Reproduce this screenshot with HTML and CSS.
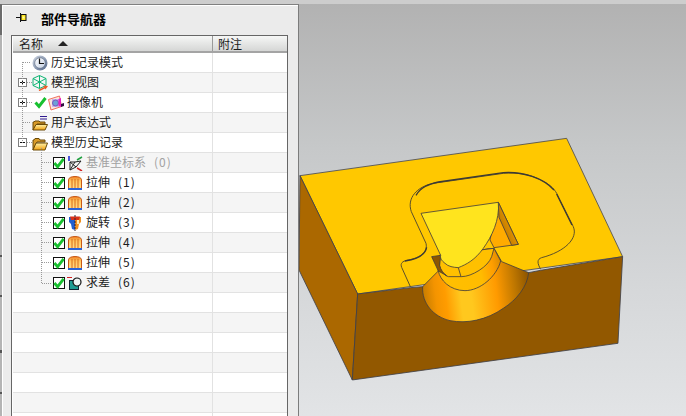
FILE: index.html
```html
<!DOCTYPE html>
<html lang="zh">
<head>
<meta charset="utf-8">
<title>部件导航器</title>
<link rel="stylesheet" href="styles.css">
</head>
<body>
<svg class="defs" width="0" height="0" aria-hidden="true">
  <defs>
    <linearGradient id="clockRim" x1="0" y1="0" x2="1" y2="1"><stop offset="0" stop-color="#d4dae4"/><stop offset="1" stop-color="#4f6488"/></linearGradient>
    <linearGradient id="clockFace" x1="0" y1="0" x2="1" y2="1"><stop offset="0" stop-color="#ffffff"/><stop offset="1" stop-color="#c4d0e4"/></linearGradient>
    <linearGradient id="folderBody" x1="0" y1="0" x2="0" y2="1"><stop offset="0" stop-color="#fff3a8"/><stop offset="1" stop-color="#f0a010"/></linearGradient>
    <linearGradient id="extrudeBody" x1="0" y1="0" x2="0" y2="1"><stop offset="0" stop-color="#ee7a20"/><stop offset=".35" stop-color="#ffc860"/><stop offset="1" stop-color="#ffdf90"/></linearGradient>
    <symbol id="i-clock" viewBox="0 0 16 16"><circle cx="8" cy="8" r="7.500" fill="url(#clockRim)"/><circle cx="8" cy="8" r="5.300" fill="url(#clockFace)" stroke="#56647c" stroke-width=".6"/><path d="M7.500 3.500V8.500H12" fill="none" stroke="#111" stroke-width="1.200"/></symbol>
    <symbol id="i-view" viewBox="0 0 16 16"><path d="M7.500 .5L14 3.500V10.500L7.500 13.500L1 10.500V3.500ZM1 3.500L7.500 7L14 3.500M7.500 7V13.500M1 10.500L7.500 7L14 10.500M7.500 .5V7" fill="none" stroke="#10b474" stroke-width="1"/><path d="M7 15.500L13 12.500" stroke="#ee5a28" stroke-width="1.500"/><path d="M11.500 10.500L16 11L13.500 14.500Z" fill="#ee5a28"/></symbol>
    <symbol id="i-check" viewBox="0 0 13 13"><path d="M1.500 6.500L5 10.500L11.500 2" fill="none" stroke="#18c030" stroke-width="3"/></symbol>
    <symbol id="i-camera" viewBox="0 0 16 16"><path d="M.5 4.500L11.500 1L13.500 11.500L3 15Z" fill="#fbe6dc" stroke="#f07060"/><rect x="4" y="4" width="7" height="8" fill="#c4b4ec"/><circle cx="7.500" cy="8" r="3" fill="#6ea0d8" stroke="#7a58b8"/><path d="M10.500 4L13 3V12L10.500 11Z" fill="#e820c0"/><path d="M13 9L16 8V11L13 12Z" fill="#301040"/></symbol>
    <symbol id="i-folder" viewBox="0 0 16 16"><path d="M1 15V5H2L3 3.500H7L8 5H13V7H5Z" fill="#d89a28" stroke="#6a4a08"/><path d="M1 15L4 8H15.500L13 15Z" fill="url(#folderBody)" stroke="#6a4a08"/></symbol>
    <symbol id="i-expr" viewBox="0 0 16 16"><path d="M8 1.500H15M8 4H15" stroke="#301a90" stroke-width="1"/><path d="M1 15V7H2L3 6H7L8 7H13V9H5Z" fill="#d89a28" stroke="#6a4a08"/><path d="M1 15L4 9.500H15.500L13 15Z" fill="url(#folderBody)" stroke="#6a4a08"/></symbol>
    <symbol id="i-extrude" viewBox="0 0 16 16"><path d="M1.500 14.500V4.500C2 2.500 4.500 1.500 8 1.500S14 2.500 14.500 4.500V14.500Z" fill="url(#extrudeBody)" stroke="#c85a18"/><path d="M5 4V14M8 4V14M11 4V14" stroke="#d86a18" stroke-width="1"/><path d="M1 14H15" stroke="#2a62d4" stroke-width="2"/></symbol>
    <symbol id="i-revolve" viewBox="0 0 16 16"><path d="M2 2H8V15L5 14L4 9L2 7Z" fill="#2060d0"/><path d="M8 2H14V7L12 9L11 14L8 15Z" fill="#f09020"/><path d="M3 1.500H13L12 5H4Z" fill="#d83018"/><path d="M8 0V16" stroke="#302030" stroke-width="1" stroke-dasharray="2 1"/><path d="M10 5H12V9H10Z" fill="#ffe8b0"/></symbol>
    <symbol id="i-datum" viewBox="0 0 16 16"><path d="M3 7L3 15L9 12L14 6L8 7Z" fill="#f4f4f4" stroke="#222" stroke-width="1"/><path d="M3 7L9 12M8 7L3 15" stroke="#222" stroke-width="1"/><path d="M2 6V1" stroke="#1020d0" stroke-width="1.500"/><path d="M10 5L15 2" stroke="#20a040" stroke-width="1.500"/><path d="M10 13L15 16" stroke="#d02020" stroke-width="1.500"/></symbol>
    <symbol id="i-subtract" viewBox="0 0 16 16"><path d="M0 2.500H5" stroke="#d02020" stroke-width="1"/><rect x="2.500" y="5.500" width="9" height="9" fill="#1f9c94" stroke="#123"/><circle cx="10" cy="7" r="4" fill="#eef4f4" stroke="#111" stroke-width="1.200"/></symbol>
    <symbol id="i-plus" viewBox="0 0 9 9"><rect x=".5" y=".5" width="8" height="8" fill="#fff" stroke="#808080"/><path d="M2 4.500H7M4.500 2V7" stroke="#111"/></symbol>
    <symbol id="i-minus" viewBox="0 0 9 9"><rect x=".5" y=".5" width="8" height="8" fill="#fff" stroke="#808080"/><path d="M2 4.500H7" stroke="#111"/></symbol>
  </defs>
</svg>

<div class="topstrip"></div>
<div class="workspace">
  <div class="edge"></div>
  <section class="panel">
    <header class="panel-title">
      <svg class="pin" viewBox="0 0 12 10"><path d="M0 4.500H4" stroke="#111"/><path d="M4.500 0V9" stroke="#111"/><rect x="5" y="1.500" width="5" height="6" fill="#ffe820" stroke="#111"/><rect x="6.500" y="3.500" width="2" height="2" fill="#fff8a0"/></svg>
      <span>部件导航器</span>
    </header>
    <div class="tree">
      <div class="tree-head">
        <div class="head-name"><span>名称</span><i class="sort"></i></div>
        <div class="head-note">附注</div>
      </div>
      <div class="rows">
        <svg class="links" width="274" height="240" viewBox="13 53 274 240"><path d="M22.500 62V143M23 62.500H31M27 82.500H32M27 102.500H33M23 122.500H31M27 142.500H32M41.500 148V283M42 162.500H52M42 182.500H52M42 202.500H52M42 222.500H52M42 242.500H52M42 262.500H52M42 283.500H52" fill="none" stroke="#9a9a9a" stroke-dasharray="1 1"/></svg>

        <div class="row"><div class="name top"><svg class="ico"><use href="#i-clock"/></svg><span class="label">历史记录模式</span></div><div class="note"></div></div>
        <div class="row"><div class="name exp"><svg class="box"><use href="#i-plus"/></svg><svg class="ico"><use href="#i-view"/></svg><span class="label">模型视图</span></div><div class="note"></div></div>
        <div class="row"><div class="name exp"><svg class="box"><use href="#i-plus"/></svg><svg class="vis"><use href="#i-check"/></svg><svg class="ico"><use href="#i-camera"/></svg><span class="label">摄像机</span></div><div class="note"></div></div>
        <div class="row"><div class="name top"><svg class="ico"><use href="#i-expr"/></svg><span class="label">用户表达式</span></div><div class="note"></div></div>
        <div class="row"><div class="name exp"><svg class="box"><use href="#i-minus"/></svg><svg class="ico"><use href="#i-folder"/></svg><span class="label">模型历史记录</span></div><div class="note"></div></div>

        <div class="row"><div class="name kid"><span class="cb"><svg><use href="#i-check"/></svg></span><svg class="ico"><use href="#i-datum"/></svg><span class="label muted">基准坐标系<span class="seq">(0)</span></span></div><div class="note"></div></div>
        <div class="row"><div class="name kid"><span class="cb"><svg><use href="#i-check"/></svg></span><svg class="ico"><use href="#i-extrude"/></svg><span class="label">拉伸<span class="seq">(1)</span></span></div><div class="note"></div></div>
        <div class="row"><div class="name kid"><span class="cb"><svg><use href="#i-check"/></svg></span><svg class="ico"><use href="#i-extrude"/></svg><span class="label">拉伸<span class="seq">(2)</span></span></div><div class="note"></div></div>
        <div class="row"><div class="name kid"><span class="cb"><svg><use href="#i-check"/></svg></span><svg class="ico"><use href="#i-revolve"/></svg><span class="label">旋转<span class="seq">(3)</span></span></div><div class="note"></div></div>
        <div class="row"><div class="name kid"><span class="cb"><svg><use href="#i-check"/></svg></span><svg class="ico"><use href="#i-extrude"/></svg><span class="label">拉伸<span class="seq">(4)</span></span></div><div class="note"></div></div>
        <div class="row"><div class="name kid"><span class="cb"><svg><use href="#i-check"/></svg></span><svg class="ico"><use href="#i-extrude"/></svg><span class="label">拉伸<span class="seq">(5)</span></span></div><div class="note"></div></div>
        <div class="row"><div class="name kid"><span class="cb"><svg><use href="#i-check"/></svg></span><svg class="ico"><use href="#i-subtract"/></svg><span class="label">求差<span class="seq">(6)</span></span></div><div class="note"></div></div>

        <div class="row"><div class="name"></div><div class="note"></div></div>
        <div class="row"><div class="name"></div><div class="note"></div></div>
        <div class="row"><div class="name"></div><div class="note"></div></div>
        <div class="row"><div class="name"></div><div class="note"></div></div>
        <div class="row"><div class="name"></div><div class="note"></div></div>
        <div class="row"><div class="name"></div><div class="note"></div></div>
        <div class="row"><div class="name"></div><div class="note"></div></div>
      </div>
    </div>
  </section>

  <main class="viewport">
    <svg class="model" viewBox="0 0 387 412" preserveAspectRatio="xMinYMin slice">
      <defs>
        <linearGradient id="coneGrad" gradientUnits="userSpaceOnUse" x1="398" y1="520" x2="716" y2="480">
          <stop offset="0" stop-color="#c27a00"/><stop offset=".13" stop-color="#f49400"/><stop offset=".22" stop-color="#ff9c00"/><stop offset=".36" stop-color="#ffc81e"/><stop offset=".46" stop-color="#ffc81e"/><stop offset=".7" stop-color="#ff9a00"/><stop offset=".88" stop-color="#bd7600"/><stop offset="1" stop-color="#925800"/>
        </linearGradient>
        <linearGradient id="ringGrad" gradientUnits="userSpaceOnUse" x1="445" y1="440" x2="635" y2="400">
          <stop offset="0" stop-color="#ffc000"/><stop offset=".65" stop-color="#ffbc00"/><stop offset=".85" stop-color="#ff9e00"/><stop offset="1" stop-color="#d88a00"/>
        </linearGradient>
        <linearGradient id="wallGrad" gradientUnits="userSpaceOnUse" x1="630" y1="300" x2="680" y2="280">
          <stop offset="0" stop-color="#b87400"/><stop offset="1" stop-color="#f4a000"/>
        </linearGradient>
      </defs>
      <g transform="translate(-9 126) scale(.3333)">
        <path class="top-face" d="M30 137L830 25L998 380L203 492Z"/>
        <path class="left-face" d="M30 137L203 492L187 750L27 420Z"/>
        <path class="front-face" d="M203 492L362 473L398 470L716 428L752 421L998 380L984 640L187 750Z"/>
        <path class="cut" d="M398 470L445 423L450 375L612 355L635 395L716 428C712 470 680 510 640 535C590 570 530 582 480 572C430 560 395 520 398 470Z" fill="url(#coneGrad)"/>
        <path class="cut" d="M445 423C450 450 480 482 525 482C570 482 620 440 632 393L612 355L450 375Z" fill="url(#ringGrad)"/>
        <path class="cut" d="M612 355L605 380C595 410 545 440 515 440L475 440C460 435 450 420 448 405L450 375Z" fill="#ffc000"/>
        <path class="cut" d="M425 380L452 376L449 406C452 420 460 430 470 437L445 423Z" fill="#8c5600"/>
        <path class="cut" d="M625 217L685 343L612 353L600 330Z" fill="#ffab00"/>
        <path class="cut" d="M625 217L685 343L665 346L627 262Z" fill="url(#wallGrad)"/>
        <path class="cut" d="M393 250L625 217C630 270 605 320 580 355C555 390 530 403 505 413C490 412 475 410 465 400C455 392 450 385 452 376Z" fill="#ffe41e"/>
        <path class="cut" d="M505 413L513 440" fill="none"/>
        <path class="contour" d="M362 472L335 412C330 400 338 394 350 391C385 385 415 370 408 340L364 245C350 205 380 170 430 160L640 130C720 122 785 160 800 190L850 290C865 325 825 365 755 383C740 388 742 400 752 418"/>
        <path class="contour-shade" d="M378 196C392 172 415 163 445 156L640 128C700 124 760 145 792 180M800 192L846 285M345 393C380 388 405 378 410 352"/>
      </g>
    </svg>
  </main>
</div>
</body>
</html>
```

FILE: styles.css
```css
* { box-sizing: border-box; }

html, body {
  margin: 0;
  height: 100%;
  overflow: hidden;
}

body {
  display: flex;
  flex-direction: column;
  font-family: "Noto Sans CJK SC", "Liberation Sans", sans-serif;
  font-size: 12px;
  color: #1c1c1c;
  background: #ccc;
}

.defs { display: block; height: 0; }

.topstrip {
  height: 4px;
  flex: none;
  background: #cdcdcd;
}

.workspace {
  flex: 1;
  min-height: 0;
  display: flex;
}

.edge {
  width: 2px;
  flex: none;
  background: linear-gradient(to bottom,
    #6c6c6c 0, #6c6c6c 31px,
    #b4b4b4 31px, #b4b4b4 251px,
    #555 251px, #555 253px,
    #b4b4b4 253px, #b4b4b4 291px,
    #555 291px, #555 293px,
    #b4b4b4 293px, #b4b4b4 346px,
    #555 346px, #555 349px,
    #b4b4b4 349px, #b4b4b4 388px,
    #555 388px, #555 390px,
    #b4b4b4 390px);
}

.panel {
  width: 297px;
  flex: none;
  display: flex;
  flex-direction: column;
  min-height: 0;
  overflow: hidden;
  background: #ebebeb;
  border-top: 1px solid #808080;
  border-right: 1px solid #7c7c7c;
  box-shadow: inset 1px 1px 0 #fff;
}

.panel-title {
  height: 30px;
  flex: none;
  display: flex;
  align-items: center;
  padding: 0 0 4px 14px;
  font-size: 13px;
  font-weight: 700;
  color: #000;
}

.pin {
  width: 12px;
  height: 10px;
  margin-right: 13px;
}

.tree {
  flex: none;
  width: 277px;
  margin-left: 9px;
  padding-left: 1px;
  background: #fff;
  border: 1px solid #666;
  border-bottom: 0;
}

.tree-head {
  height: 17px;
  display: grid;
  grid-template-columns: 200px 74px;
  background: linear-gradient(to bottom, #f6f7f6, #d5d6d5);
  border-bottom: 2px solid #a4a4a4;
  line-height: 14px;
}

.head-name {
  display: flex;
  align-items: center;
  padding-left: 6px;
  border-right: 1px solid #9a9a9a;
}

.head-note {
  display: flex;
  align-items: center;
  padding-left: 5px;
}

.sort {
  width: 0;
  height: 0;
  margin-left: 15px;
  border-left: 5px solid transparent;
  border-right: 5px solid transparent;
  border-bottom: 5px solid #222;
}

.rows { position: relative; }

.links {
  position: absolute;
  left: 0;
  top: 0;
  pointer-events: none;
}

.row {
  height: 20px;
  display: grid;
  grid-template-columns: 200px 74px;
  border-bottom: 1px solid #e2e2e2;
  background: #fff;
}

.row:nth-child(odd) { background: #f5f5f5; }

.name {
  display: flex;
  align-items: center;
  border-right: 1px solid #e2e2e2;
}

.name.top { padding-left: 19px; }
.name.exp { padding-left: 5px; }
.name.kid { padding-left: 40px; }

.box {
  width: 9px;
  height: 9px;
  margin-right: 5px;
  flex: none;
}

.ico {
  width: 16px;
  height: 16px;
  margin-right: 3px;
  flex: none;
}

.vis {
  width: 13px;
  height: 13px;
  margin-left: 2px;
  flex: none;
  margin-right: 1px;
}

.cb {
  width: 12px;
  height: 12px;
  margin-right: 2px;
  flex: none;
  display: block;
  background: #fff;
  border: 1px solid #111;
}

.cb svg {
  display: block;
  width: 12px;
  height: 12px;
  margin: -1px 0 0 -1px;
}

.label {
  white-space: pre;
  line-height: 16px;
  margin-bottom: 2px;
}

.seq {
  margin-left: 8px;
  letter-spacing: 1px;
}

.muted { color: #a2a2a2; }

.viewport {
  flex: 1;
  min-width: 0;
  background: linear-gradient(to bottom, #b2b2b2 0, #c6c8c9 35%, #d6d8da 70%, #e2e4e6 100%);
}

.model {
  display: block;
  width: 100%;
  height: 100%;
}

.top-face { fill: #ffc800; stroke: #4a4a50; stroke-width: 2.5; }
.left-face { fill: #ab6800; stroke: #3f4048; stroke-width: 2.5; }
.front-face { fill: #925800; stroke: #3f4048; stroke-width: 2.5; }
.cut { stroke: #443f3c; stroke-width: 2.5; }
.contour { fill: none; stroke: #5a4e2c; stroke-width: 3; }
.contour-shade { fill: none; stroke: #3c3a34; stroke-width: 4; }
```
